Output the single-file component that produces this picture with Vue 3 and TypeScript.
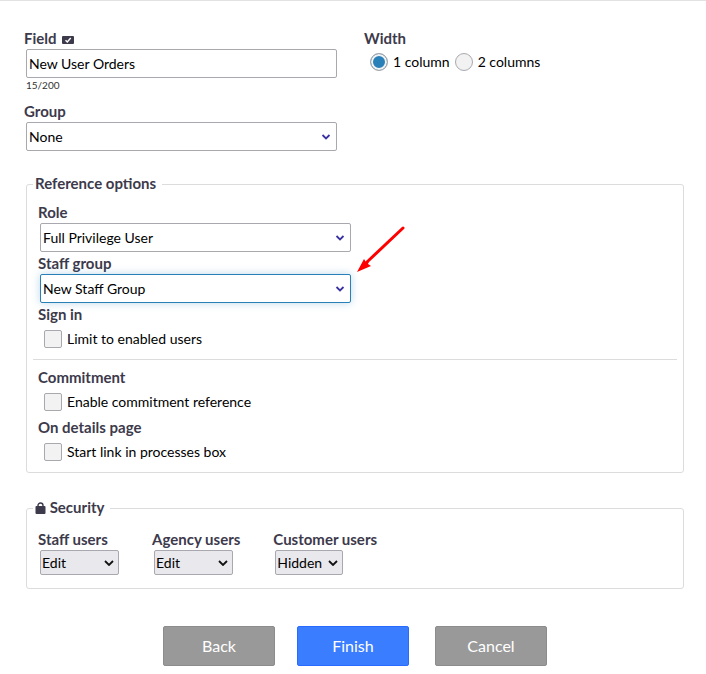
<script setup lang="ts">
import { ref } from 'vue'

interface SecurityRule {
  id: string
  label: string
  value: string
}

const levels: string[] = ['Edit', 'View', 'Hidden']
const maxLength = 200

const fieldName = ref('New User Orders')
const group = ref('None')
const width = ref('1')
const role = ref('Full Privilege User')
const staffGroup = ref('New Staff Group')
const limitToEnabled = ref(false)
const commitment = ref(false)
const startLink = ref(false)
const security = ref<SecurityRule[]>([
  { id: 'staff', label: 'Staff users', value: 'Edit' },
  { id: 'agency', label: 'Agency users', value: 'Edit' },
  { id: 'customer', label: 'Customer users', value: 'Hidden' },
])
</script>

<template>
  <form class="page" @submit.prevent>
    <div class="top">
      <div class="main-column">
        <label class="label" for="field-name">
          Field
          <svg class="tick-icon" viewBox="0 0 12 8" aria-hidden="true">
            <rect width="12" height="8" rx="1" fill="#3d3a4b" />
            <path d="M3.5 4.2 5.3 6 8.7 2" fill="none" stroke="#fff" stroke-width="1.4" />
          </svg>
        </label>
        <input id="field-name" v-model="fieldName" class="control" type="text" :maxlength="maxLength" />
        <div class="count">{{ fieldName.length }}/{{ maxLength }}</div>
        <label class="label" for="group">Group</label>
        <div class="select">
          <select id="group" v-model="group" class="control">
            <option>None</option>
          </select>
          <svg class="chevron" viewBox="0 0 10 6" aria-hidden="true"><path d="M1.5 1 5 4.4 8.5 1" /></svg>
        </div>
      </div>

      <div role="radiogroup" aria-labelledby="width-label">
        <div id="width-label" class="label">Width</div>
        <div class="radios">
          <label class="choice"><input v-model="width" type="radio" name="width" value="1" />1 column</label>
          <label class="choice"><input v-model="width" type="radio" name="width" value="2" />2 columns</label>
        </div>
      </div>
    </div>

    <fieldset class="panel reference">
      <legend class="label">Reference options</legend>
      <div class="group">
        <label class="label" for="role">Role</label>
        <div class="select">
          <select id="role" v-model="role" class="control">
            <option>Full Privilege User</option>
          </select>
          <svg class="chevron" viewBox="0 0 10 6" aria-hidden="true"><path d="M1.5 1 5 4.4 8.5 1" /></svg>
        </div>
        <label class="label" for="staff-group">Staff group</label>
        <div class="select">
          <select id="staff-group" v-model="staffGroup" class="control active">
            <option>New Staff Group</option>
          </select>
          <svg class="chevron" viewBox="0 0 10 6" aria-hidden="true"><path d="M1.5 1 5 4.4 8.5 1" /></svg>
          <svg class="arrow" viewBox="0 0 50 50" aria-hidden="true">
            <path d="M46 4 10 38" stroke="#f00" stroke-width="3" stroke-linecap="round" />
            <path d="M0 48 7 35 9 38 12 37 11 40 14 42Z" fill="#f00" />
          </svg>
        </div>
        <div class="label">Sign in</div>
        <label class="choice"><input v-model="limitToEnabled" type="checkbox" />Limit to enabled users</label>
      </div>
      <hr />
      <div class="group">
        <div class="label">Commitment</div>
        <label class="choice"><input v-model="commitment" type="checkbox" />Enable commitment reference</label>
        <div class="label spaced">On details page</div>
        <label class="choice"><input v-model="startLink" type="checkbox" />Start link in processes box</label>
      </div>
    </fieldset>

    <fieldset class="panel security">
      <legend class="label">
        <svg class="lock-icon" viewBox="0 0 11 12" aria-hidden="true">
          <path d="M3 5.5V3.5a2.5 2.5 0 0 1 5 0V5.5" fill="none" stroke="#3d3a4b" stroke-width="1.4" />
          <rect x="0.5" y="4" width="10" height="8" rx="1" fill="#3d3a4b" />
        </svg>
        Security
      </legend>
      <div class="rules">
        <div v-for="rule in security" :key="rule.id">
          <label class="label" :for="rule.id">{{ rule.label }}</label>
          <div class="select compact" :class="{ narrow: rule.value === 'Hidden' }">
            <select :id="rule.id" v-model="rule.value" class="control">
              <option v-for="level in levels" :key="level">{{ level }}</option>
            </select>
            <svg class="chevron" viewBox="0 0 10 6" aria-hidden="true"><path d="M1 1 5 5 9 1" /></svg>
          </div>
        </div>
      </div>
    </fieldset>

    <div class="actions">
      <button type="button">Back</button>
      <button type="submit" class="primary">Finish</button>
      <button type="button" class="cancel">Cancel</button>
    </div>
  </form>
</template>

<style>
body {
  background: #fff;
}
</style>

<style scoped>
.page {
  border-top: 1px solid #e2e2e2;
  padding: 28px 22px 8px 24px;
  font: 14px/20px Lato, "Liberation Sans", sans-serif;
  color: #000;
}

.top {
  display: grid;
  grid-template-columns: 340px 1fr;
}

.label {
  display: block;
  padding-bottom: 2px;
  font-size: 15px;
  line-height: 18px;
  font-weight: 700;
  color: #3d3a4b;
}

.tick-icon {
  width: 12px;
  height: 8px;
  margin-left: 2px;
}

.control {
  display: block;
  box-sizing: border-box;
  width: 100%;
  height: 29px;
  margin: 0;
  padding: 0 2px;
  border: 1px solid #a9a8ae;
  border-radius: 2px;
  background: #fff;
  color: #000;
  font: inherit;
  appearance: none;
}

input.control,
.select {
  width: 311px;
  margin-left: 2px;
}

.control.active {
  border-color: #2980b9;
  box-shadow: 0 0 8px rgba(41, 128, 185, 0.3);
}

.select {
  position: relative;
}

.chevron {
  position: absolute;
  top: 12px;
  right: 6px;
  width: 10px;
  height: 6px;
  fill: none;
  stroke: #3a32a0;
  stroke-width: 1.8;
  pointer-events: none;
}

.arrow {
  position: absolute;
  left: 317px;
  bottom: 29px;
  width: 50px;
  height: 50px;
  pointer-events: none;
}

.count {
  height: 24px;
  margin-left: 2px;
  font-size: 10px;
  line-height: 14px;
  color: #333;
}

.radios {
  display: flex;
  gap: 5px;
  padding-left: 6px;
}

.choice {
  display: flex;
  align-items: center;
  gap: 5px;
  height: 28px;
}

.radios .choice {
  height: 26px;
}

.choice input {
  flex: none;
  width: 18px;
  height: 18px;
  margin: 0;
  border: 1px solid #a9a8ae;
  border-radius: 2px;
  background: #f2f2f2;
  appearance: none;
}

.choice input[type="radio"] {
  border-radius: 50%;
}

.choice input:checked {
  background: #2980b9;
  box-shadow: inset 0 0 0 2px #f2f2f2;
}

.panel {
  min-width: 0;
  margin: 23px 0 0 2px;
  padding: 9px 6px 6px;
  border: 1px solid #dcdcdc;
  border-radius: 3px;
}

.panel legend {
  padding-left: 2px;
  padding-right: 6px;
}

.group {
  padding-left: 5px;
}

.group .select + .label,
.spaced {
  margin-top: 2px;
}

.group .choice {
  padding-left: 6px;
}

hr {
  margin: 6px 0 8px;
  border: 0;
  border-top: 1px solid #dcdcdc;
}

.security {
  margin-top: 25px;
  padding: 12px 11px 13px;
}

.security legend {
  margin-left: -5px;
}

.lock-icon {
  width: 11px;
  height: 12px;
  vertical-align: -1px;
}

.rules {
  display: flex;
  gap: 33px;
}

.compact {
  width: 79px;
}

.compact.narrow {
  width: 68px;
}

.compact .control {
  height: 25px;
  padding: 0 1px;
  background: #e9e8ed;
}

.compact .chevron {
  top: 10px;
  right: 5px;
  stroke: #111;
}

.actions {
  display: flex;
  justify-content: center;
  gap: 22px;
  margin-top: 37px;
  padding-left: 2px;
}

button {
  width: 112px;
  height: 40px;
  padding: 0;
  border: 1px solid #8c8c8c;
  border-radius: 2px;
  background: #999;
  color: #fff;
  font: 16px/20px Lato, "Liberation Sans", sans-serif;
}

.primary {
  border-color: #2a6bff;
  background: #3a7dff;
}

.cancel {
  margin-left: 4px;
}
</style>
